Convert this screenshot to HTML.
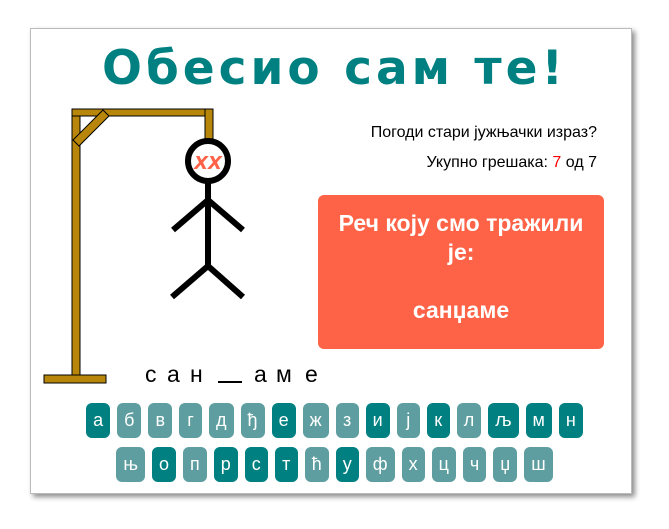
<!DOCTYPE html>
<html><head><meta charset="utf-8"><style>
*{margin:0;padding:0;box-sizing:border-box}
body{width:669px;height:529px;background:#fff;position:relative;overflow:hidden;font-family:"Liberation Sans","DejaVu Sans",sans-serif}
.card{position:absolute;left:30px;top:28px;width:602px;height:466px;border:1px solid #bbb;box-shadow:3px 3px 5px rgba(0,0,0,.45);background:#fff}
.title{position:absolute;left:0;top:41px;width:669px;text-align:center;font-family:"DejaVu Sans",sans-serif;font-weight:bold;font-size:47px;color:#008080;letter-spacing:4px}
.t{position:absolute;font-size:16px;color:#000;text-align:right;right:72px}
.box{position:absolute;left:318px;top:195px;width:286px;height:154px;background:#ff6347;border-radius:6px;color:#fff;font-weight:bold;font-size:23px;text-align:center;line-height:29px;padding-top:14px}
.w{position:absolute;top:361px;font-size:23px;color:#000}
.row{position:absolute;left:0;width:669px;display:flex;justify-content:center;gap:7px}
.row span{height:35px;padding:0 7px;min-width:23px;border-radius:6px;color:#fff;font-size:18px;line-height:35px;text-align:center;background:#5f9ea0}
.row span.d{background:#008080}
</style></head><body>
<div class="card"></div>
<div class="title">Обесио сам те!</div>
<svg style="position:absolute;left:0;top:0" width="669" height="529">
<g fill="#b8860b" stroke="#000" stroke-width="1">
<rect x="44" y="375" width="62" height="8"/>
<rect x="72" y="109" width="8" height="266"/>
<rect x="72" y="109" width="141" height="7"/>
<rect x="205" y="109" width="8" height="32"/>
<polygon points="73,140 103,110 109,116 79,146"/>
</g>
<g stroke="#000" stroke-width="6" fill="none">
<circle cx="208" cy="161" r="20" fill="#fff"/>
<line x1="208" y1="183" x2="208" y2="268"/>
<line x1="208" y1="200" x2="173" y2="230"/>
<line x1="208" y1="200" x2="243" y2="230"/>
<line x1="208" y1="266" x2="172" y2="297"/>
<line x1="208" y1="266" x2="243" y2="297"/>
</g>
<text x="208" y="169" text-anchor="middle" font-family="DejaVu Sans" font-style="italic" font-weight="bold" font-size="18" fill="#ff6347">XX</text>
</svg>
<div class="t" style="top:124px">Погоди стари јужњачки израз?</div>
<div class="t" style="top:154px">Укупно грешака: <span style="color:red">7</span> од 7</div>
<div class="box">Реч коју смо тражили<br>је:<br><br>санџаме</div>
<div class="w" style="left:145px">с</div><div class="w" style="left:167px">а</div><div class="w" style="left:190px">н</div>
<div style="position:absolute;left:218px;top:381px;width:24px;height:2px;background:#000"></div>
<div class="w" style="left:254px">а</div><div class="w" style="left:276px">м</div><div class="w" style="left:305px">е</div>
<div class="row" style="top:403px"><span class="d">а</span><span>б</span><span>в</span><span>г</span><span>д</span><span>ђ</span><span class="d">е</span><span>ж</span><span>з</span><span class="d">и</span><span>ј</span><span class="d">к</span><span>л</span><span class="d">љ</span><span class="d">м</span><span class="d">н</span></div>
<div class="row" style="top:447px"><span>њ</span><span class="d">о</span><span>п</span><span class="d">р</span><span class="d">с</span><span class="d">т</span><span>ћ</span><span class="d">у</span><span>ф</span><span>х</span><span>ц</span><span>ч</span><span>џ</span><span>ш</span></div>
</body></html>
